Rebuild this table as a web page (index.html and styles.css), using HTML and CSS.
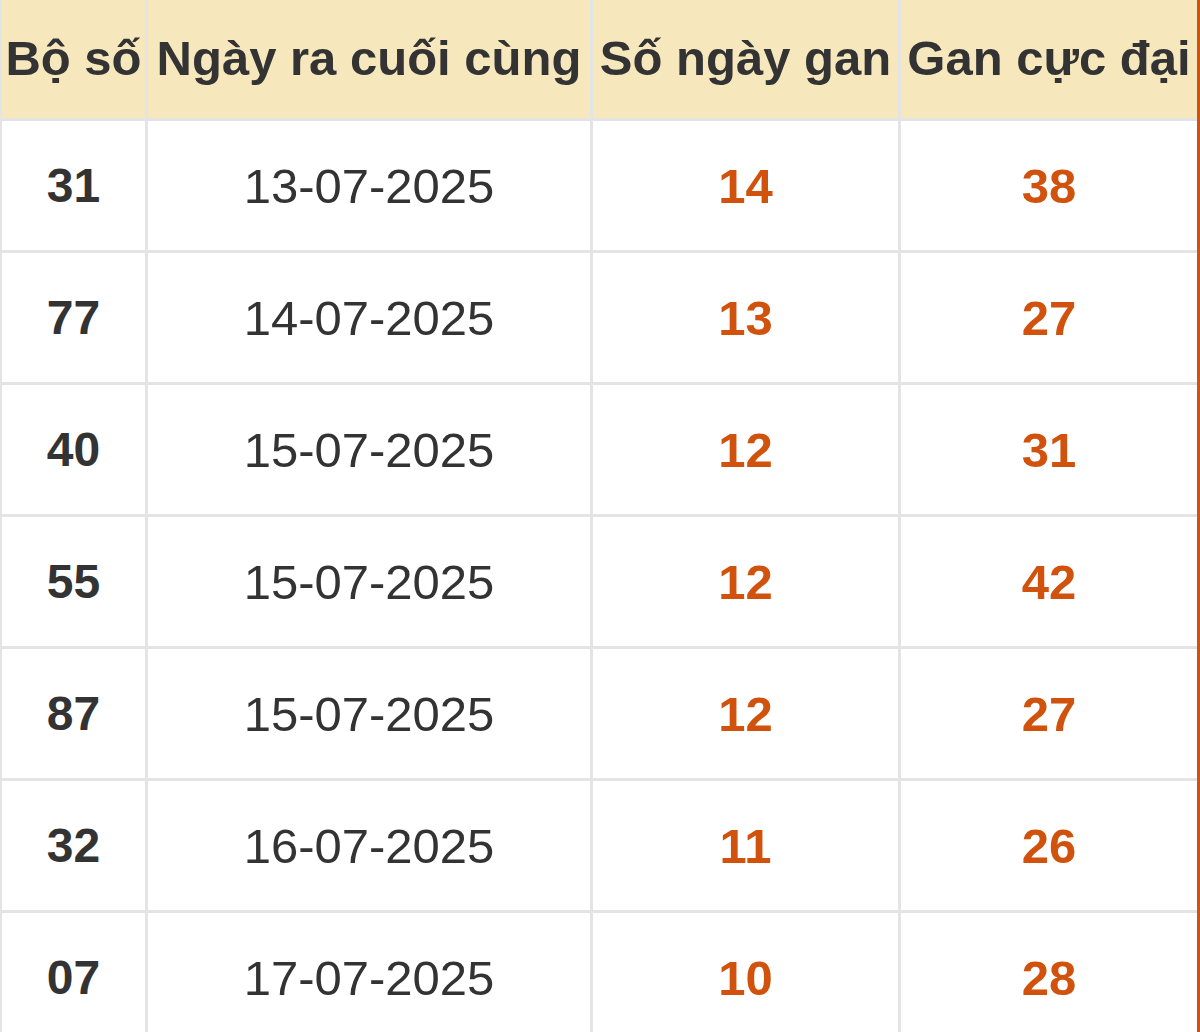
FILE: index.html
```html
<!DOCTYPE html>
<html lang="vi">
<head>
<meta charset="utf-8">
<title>Lô gan</title>
<link rel="stylesheet" href="styles.css">
</head>
<body>
<div class="gan-table">
  <div class="cell head">Bộ số</div>
  <div class="cell head">Ngày ra cuối cùng</div>
  <div class="cell head">Số ngày gan</div>
  <div class="cell head">Gan cực đại</div>

  <div class="cell num">31</div><div class="cell date">13-07-2025</div><div class="cell hot">14</div><div class="cell hot">38</div>
  <div class="cell num">77</div><div class="cell date">14-07-2025</div><div class="cell hot">13</div><div class="cell hot">27</div>
  <div class="cell num">40</div><div class="cell date">15-07-2025</div><div class="cell hot">12</div><div class="cell hot">31</div>
  <div class="cell num">55</div><div class="cell date">15-07-2025</div><div class="cell hot">12</div><div class="cell hot">42</div>
  <div class="cell num">87</div><div class="cell date">15-07-2025</div><div class="cell hot">12</div><div class="cell hot">27</div>
  <div class="cell num">32</div><div class="cell date">16-07-2025</div><div class="cell hot">11</div><div class="cell hot">26</div>
  <div class="cell num">07</div><div class="cell date">17-07-2025</div><div class="cell hot">10</div><div class="cell hot">28</div>
</div>
</body>
</html>
```
FILE: styles.css
```css
html, body {
  margin: 0;
  padding: 0;
  background: #ffffff;
  overflow: hidden;
}

.gan-table {
  display: grid;
  grid-template-columns: 143px 442px 305px 296px;
  grid-template-rows: 118px repeat(7, 129px);
  gap: 3px;
  padding-left: 2px;
  background: #e4e4e4;
  border-right: 3px solid #d0520c;
  width: 1195px;
  font-family: "Liberation Sans", Arial, sans-serif;
  color: #333333;
}

.cell {
  display: flex;
  align-items: center;
  justify-content: center;
  background: #ffffff;
  white-space: nowrap;
  font-size: 49px;
}

.head {
  background: #f6e7bd;
  font-weight: bold;
  padding-bottom: 2px;
}

.num {
  font-weight: bold;
  font-size: 48px;
}

.date {
  font-weight: normal;
  font-size: 49px;
}

.hot {
  font-weight: bold;
  font-size: 49px;
  color: #d0520c;
}
```
